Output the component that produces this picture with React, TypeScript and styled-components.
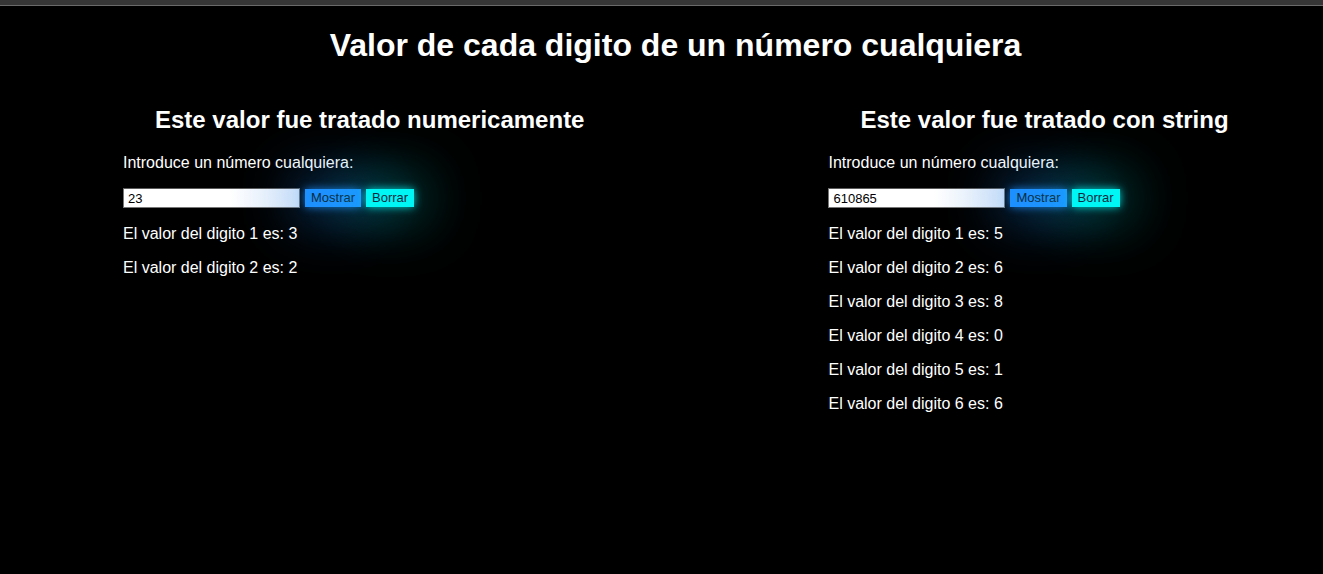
import React from "react";
import styled, { createGlobalStyle } from "styled-components";

const Global = createGlobalStyle`
  html, body { margin: 0; padding: 0; background: #000; }
  body { font-family: "Liberation Sans", Arial, sans-serif; color: #fff; }
`;

const TopStrip = styled.div`
  height: 5px;
  background: #363636;
  border-bottom: 1px solid #6a6a6a;
`;

const Page = styled.main`
  padding: 0 8px;
`;

const Title = styled.h1`
  margin: 21px 0 0;
  padding-left: 28px;
  font-size: 32px;
  font-weight: bold;
  text-align: center;
  line-height: 37px;
`;

const Columns = styled.div`
  display: flex;
  align-items: flex-start;
  padding-left: 115px;
  gap: 212px;
  margin-top: 42px;
`;

const Column = styled.section`
  display: flex;
  flex-direction: column;
`;

const Heading = styled.h2`
  margin: 0 32px;
  font-size: 24px;
  font-weight: bold;
  text-align: center;
  line-height: 28px;
`;

const Text = styled.p<{ $gap?: number }>`
  margin: ${(p) => p.$gap ?? 16}px 0 0;
  font-size: 16px;
  line-height: 18px;
`;

const Row = styled.div`
  display: flex;
  align-items: center;
  gap: 5px;
  margin-top: 16px;
  height: 20px;
`;

const Input = styled.input`
  box-sizing: border-box;
  width: 177px;
  height: 20px;
  padding: 1px 4px;
  border: 1px solid #767676;
  border-top-color: #5a5a5a;
  background: linear-gradient(90deg, #ffffff 0%, #ffffff 60%, #dae7f8 100%);
  font-family: "Liberation Sans", Arial, sans-serif;
  font-size: 13px;
  color: #000;
  outline: none;
`;

const Button = styled.button<{ $tone: "blue" | "cyan" }>`
  height: 18px;
  padding: 0 6px;
  border: none;
  font-family: "Liberation Sans", Arial, sans-serif;
  font-size: 13px;
  line-height: 18px;
  color: #0c2a40;
  background: ${(p) => (p.$tone === "blue" ? "#1e90ff" : "#00f5f5")};
  box-shadow: ${(p) =>
    p.$tone === "blue"
      ? "0 0 8px rgba(30,144,255,0.8), 0 0 55px 10px rgba(30,144,255,0.45)"
      : "0 0 8px rgba(0,255,255,0.8), 0 0 55px 10px rgba(0,230,230,0.4)"};
`;

const Results = styled.div`
  margin-top: 1px;
`;

function Panel({ heading, value }: { heading: string; value: string }) {
  const digits = value.split("").reverse();
  return (
    <Column>
      <Heading>{heading}</Heading>
      <Text $gap={20}>Introduce un número cualquiera:</Text>
      <Row>
        <Input defaultValue={value} />
        <Button $tone="blue">Mostrar</Button>
        <Button $tone="cyan">Borrar</Button>
      </Row>
      <Results>
        {digits.map((d, i) => (
          <Text key={i}>
            El valor del digito {i + 1} es: {d}
          </Text>
        ))}
      </Results>
    </Column>
  );
}

export default function App() {
  return (
    <>
      <Global />
      <TopStrip />
      <Page>
        <Title>Valor de cada digito de un número cualquiera</Title>
        <Columns>
          <Panel heading="Este valor fue tratado numericamente" value="23" />
          <Panel heading="Este valor fue tratado con string" value="610865" />
        </Columns>
      </Page>
    </>
  );
}
